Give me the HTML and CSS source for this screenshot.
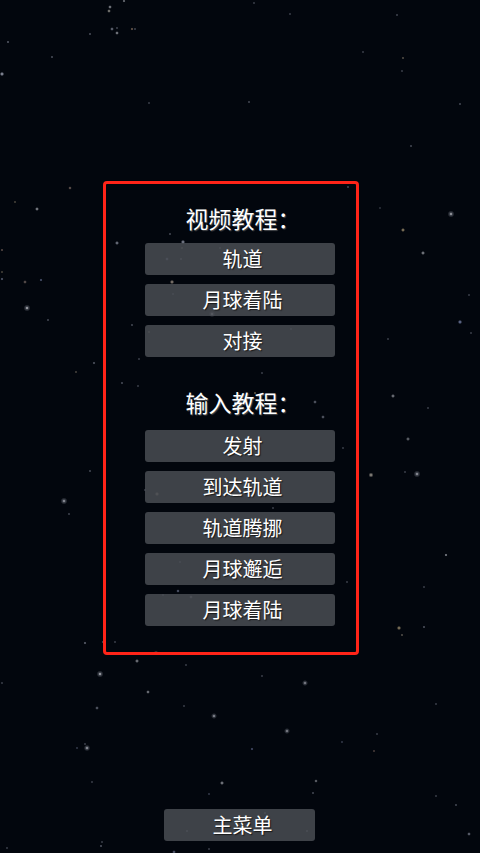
FILE: index.html
```html
<!DOCTYPE html>
<html lang="zh-CN">
<head>
<meta charset="utf-8">
<title>教程</title>
<link rel="stylesheet" href="styles.css">
</head>
<body>
<div class="page">
  <section class="panel">
    <h2 class="heading heading-video">视频教程：</h2>
    <div class="btn-list">
      <button class="btn">轨道</button>
      <button class="btn">月球着陆</button>
      <button class="btn">对接</button>
    </div>
    <h2 class="heading heading-input">输入教程：</h2>
    <div class="btn-list">
      <button class="btn">发射</button>
      <button class="btn">到达轨道</button>
      <button class="btn">轨道腾挪</button>
      <button class="btn">月球邂逅</button>
      <button class="btn">月球着陆</button>
    </div>
  </section>
  <button class="btn btn-menu">主菜单</button>
</div>
</body>
</html>
```
FILE: styles.css
```css
html, body {
  margin: 0;
  padding: 0;
  background: #02060d;
}

.page {
  width: 480px;
  height: 853px;
  display: flex;
  flex-direction: column;
  align-items: flex-start;
  font-family: "Noto Sans CJK SC", "Noto Sans", sans-serif;
  color: #fff;
  background-color: #02060d;
  background-image:
    radial-gradient(circle at 110px 7px, rgba(220,222,230,.8) 0, rgba(220,222,230,0) 1.8px),
    radial-gradient(circle at 109px 11px, rgba(220,215,200,.8) 0, rgba(220,215,200,0) 1.8px),
    radial-gradient(circle at 124px 1px, rgba(220,222,230,.7) 0, rgba(220,222,230,0) 1.6px),
    radial-gradient(circle at 112px 29px, rgba(200,205,225,.7) 0, rgba(200,205,225,0) 1.8px),
    radial-gradient(circle at 117px 28px, rgba(200,205,225,.5) 0, rgba(200,205,225,0) 1.3px),
    radial-gradient(circle at 117px 33px, rgba(220,222,230,.8) 0, rgba(220,222,230,0) 1.8px),
    radial-gradient(circle at 132px 29px, rgba(210,170,140,.7) 0, rgba(210,170,140,0) 1.6px),
    radial-gradient(circle at 135px 29px, rgba(200,205,225,.5) 0, rgba(200,205,225,0) 1.3px),
    radial-gradient(circle at 90px 34px, rgba(200,205,225,.55) 0, rgba(200,205,225,0) 1.4px),
    radial-gradient(circle at 8px 42px, rgba(200,205,225,.6) 0, rgba(200,205,225,0) 1.5px),
    radial-gradient(circle at 52px 57px, rgba(200,205,225,.55) 0, rgba(200,205,225,0) 1.4px),
    radial-gradient(circle at 2px 74px, rgba(210,215,235,.85) 0, rgba(210,215,235,0) 2.2px),
    radial-gradient(circle at 149px 103px, rgba(200,205,225,.45) 0, rgba(200,205,225,0) 1.3px),
    radial-gradient(circle at 254px 3px, rgba(200,205,225,.45) 0, rgba(200,205,225,0) 1.3px),
    radial-gradient(circle at 290px 14px, rgba(200,205,225,.45) 0, rgba(200,205,225,0) 1.3px),
    radial-gradient(circle at 397px 15px, rgba(200,205,225,.5) 0, rgba(200,205,225,0) 1.3px),
    radial-gradient(circle at 363px 52px, rgba(200,205,225,.45) 0, rgba(200,205,225,0) 1.3px),
    radial-gradient(circle at 403px 58px, rgba(210,190,160,.6) 0, rgba(210,190,160,0) 1.4px),
    radial-gradient(circle at 402px 71px, rgba(200,205,225,.45) 0, rgba(200,205,225,0) 1.3px),
    radial-gradient(circle at 249px 102px, rgba(200,205,225,.5) 0, rgba(200,205,225,0) 1.4px),
    radial-gradient(circle at 460px 104px, rgba(200,205,225,.5) 0, rgba(200,205,225,0) 1.4px),
    radial-gradient(circle at 411px 146px, rgba(200,205,225,.5) 0, rgba(200,205,225,0) 1.4px),
    radial-gradient(circle at 348px 187px, rgba(200,205,225,.5) 0, rgba(200,205,225,0) 1.4px),
    radial-gradient(circle at 380px 208px, rgba(200,205,225,.4) 0, rgba(200,205,225,0) 1.2px),
    radial-gradient(circle at 451px 214px, rgba(230,230,235,.9) 0, rgba(200,205,220,.3) 1.5px, rgba(200,205,220,0) 3.5px),
    radial-gradient(circle at 403px 230px, rgba(225,200,150,.8) 0, rgba(225,200,150,0) 2px),
    radial-gradient(circle at 423px 253px, rgba(220,222,230,.75) 0, rgba(220,222,230,0) 2px),
    radial-gradient(circle at 469px 295px, rgba(200,205,225,.45) 0, rgba(200,205,225,0) 1.3px),
    radial-gradient(circle at 460px 322px, rgba(170,185,240,.75) 0, rgba(170,185,240,0) 2.2px),
    radial-gradient(circle at 471px 333px, rgba(200,205,225,.45) 0, rgba(200,205,225,0) 1.3px),
    radial-gradient(circle at 388px 339px, rgba(200,205,225,.45) 0, rgba(200,205,225,0) 1.3px),
    radial-gradient(circle at 291px 329px, rgba(200,205,225,.45) 0, rgba(200,205,225,0) 1.3px),
    radial-gradient(circle at 262px 373px, rgba(200,205,225,.45) 0, rgba(200,205,225,0) 1.3px),
    radial-gradient(circle at 255px 393px, rgba(220,200,150,.6) 0, rgba(220,200,150,0) 1.5px),
    radial-gradient(circle at 393px 396px, rgba(220,222,230,.7) 0, rgba(220,222,230,0) 2px),
    radial-gradient(circle at 428px 408px, rgba(200,205,225,.45) 0, rgba(200,205,225,0) 1.3px),
    radial-gradient(circle at 315px 402px, rgba(200,205,225,.6) 0, rgba(200,205,225,0) 1.8px),
    radial-gradient(circle at 323px 417px, rgba(200,205,225,.6) 0, rgba(200,205,225,0) 1.8px),
    radial-gradient(circle at 117px 243px, rgba(210,215,235,.7) 0, rgba(210,215,235,0) 2px),
    radial-gradient(circle at 170px 234px, rgba(200,205,225,.5) 0, rgba(200,205,225,0) 1.4px),
    radial-gradient(circle at 183px 242px, rgba(210,215,235,.75) 0, rgba(210,215,235,0) 2.2px),
    radial-gradient(circle at 182px 248px, rgba(210,200,180,.5) 0, rgba(210,200,180,0) 1.4px),
    radial-gradient(circle at 167px 259px, rgba(180,195,240,.6) 0, rgba(180,195,240,0) 1.8px),
    radial-gradient(circle at 181px 259px, rgba(200,205,225,.5) 0, rgba(200,205,225,0) 1.5px),
    radial-gradient(circle at 172px 282px, rgba(225,205,185,.75) 0, rgba(225,205,185,0) 2.2px),
    radial-gradient(circle at 173px 294px, rgba(200,205,225,.45) 0, rgba(200,205,225,0) 1.3px),
    radial-gradient(circle at 212px 314px, rgba(225,225,235,.8) 0, rgba(200,205,220,.25) 1.5px, rgba(200,205,220,0) 3.2px),
    radial-gradient(circle at 132px 325px, rgba(200,205,225,.5) 0, rgba(200,205,225,0) 1.4px),
    radial-gradient(circle at 149px 332px, rgba(210,190,160,.5) 0, rgba(210,190,160,0) 1.4px),
    radial-gradient(circle at 139px 359px, rgba(200,205,225,.45) 0, rgba(200,205,225,0) 1.3px),
    radial-gradient(circle at 220px 248px, rgba(200,205,225,.45) 0, rgba(200,205,225,0) 1.3px),
    radial-gradient(circle at 70px 188px, rgba(215,180,160,.65) 0, rgba(215,180,160,0) 1.7px),
    radial-gradient(circle at 15px 202px, rgba(210,190,150,.5) 0, rgba(210,190,150,0) 1.4px),
    radial-gradient(circle at 37px 209px, rgba(220,222,230,.8) 0, rgba(220,222,230,0) 1.9px),
    radial-gradient(circle at 2px 250px, rgba(210,170,150,.6) 0, rgba(210,170,150,0) 1.5px),
    radial-gradient(circle at 2px 272px, rgba(210,190,150,.5) 0, rgba(210,190,150,0) 1.4px),
    radial-gradient(circle at 2px 279px, rgba(190,200,235,.6) 0, rgba(190,200,235,0) 1.6px),
    radial-gradient(circle at 25px 282px, rgba(215,185,170,.6) 0, rgba(215,185,170,0) 1.8px),
    radial-gradient(circle at 41px 280px, rgba(170,185,240,.6) 0, rgba(170,185,240,0) 1.6px),
    radial-gradient(circle at 27px 308px, rgba(235,235,240,.95) 0, rgba(200,205,220,.3) 1.5px, rgba(200,205,220,0) 3.5px),
    radial-gradient(circle at 48px 320px, rgba(200,205,225,.5) 0, rgba(200,205,225,0) 1.4px),
    radial-gradient(circle at 94px 363px, rgba(200,205,225,.55) 0, rgba(200,205,225,0) 1.6px),
    radial-gradient(circle at 76px 372px, rgba(210,190,160,.5) 0, rgba(210,190,160,0) 1.4px),
    radial-gradient(circle at 90px 471px, rgba(200,205,225,.5) 0, rgba(200,205,225,0) 1.4px),
    radial-gradient(circle at 64px 501px, rgba(225,225,235,.85) 0, rgba(200,205,220,.3) 1.5px, rgba(200,205,220,0) 3.5px),
    radial-gradient(circle at 69px 514px, rgba(200,205,225,.5) 0, rgba(200,205,225,0) 1.3px),
    radial-gradient(circle at 122px 383px, rgba(200,205,225,.5) 0, rgba(200,205,225,0) 1.5px),
    radial-gradient(circle at 138px 386px, rgba(200,205,225,.45) 0, rgba(200,205,225,0) 1.3px),
    radial-gradient(circle at 343px 448px, rgba(200,205,225,.45) 0, rgba(200,205,225,0) 1.3px),
    radial-gradient(circle at 145px 490px, rgba(200,205,225,.45) 0, rgba(200,205,225,0) 1.3px),
    radial-gradient(circle at 157px 494px, rgba(225,210,190,.6) 0, rgba(225,210,190,0) 2.2px),
    radial-gradient(circle at 273px 508px, rgba(200,205,225,.45) 0, rgba(200,205,225,0) 1.3px),
    radial-gradient(circle at 180px 562px, rgba(200,205,225,.45) 0, rgba(200,205,225,0) 1.3px),
    radial-gradient(circle at 347px 582px, rgba(200,205,225,.45) 0, rgba(200,205,225,0) 1.3px),
    radial-gradient(circle at 178px 591px, rgba(190,200,240,.6) 0, rgba(190,200,240,0) 1.7px),
    radial-gradient(circle at 163px 595px, rgba(200,205,225,.45) 0, rgba(200,205,225,0) 1.3px),
    radial-gradient(circle at 191px 597px, rgba(210,215,235,.55) 0, rgba(210,215,235,0) 1.8px),
    radial-gradient(circle at 408px 439px, rgba(220,222,230,.6) 0, rgba(220,222,230,0) 2px),
    radial-gradient(circle at 371px 475px, rgba(225,215,200,.75) 0, rgba(225,215,200,0) 2.5px),
    radial-gradient(circle at 405px 472px, rgba(200,205,225,.45) 0, rgba(200,205,225,0) 1.3px),
    radial-gradient(circle at 417px 474px, rgba(225,225,235,.85) 0, rgba(200,205,220,.3) 1.5px, rgba(200,205,220,0) 3.5px),
    radial-gradient(circle at 446px 555px, rgba(220,222,230,.8) 0, rgba(220,222,230,0) 1.6px),
    radial-gradient(circle at 424px 587px, rgba(200,205,225,.45) 0, rgba(200,205,225,0) 1.3px),
    radial-gradient(circle at 399px 628px, rgba(225,200,150,.75) 0, rgba(225,200,150,0) 2.2px),
    radial-gradient(circle at 424px 627px, rgba(200,205,225,.55) 0, rgba(200,205,225,0) 1.5px),
    radial-gradient(circle at 402px 635px, rgba(210,195,170,.55) 0, rgba(210,195,170,0) 1.5px),
    radial-gradient(circle at 85px 643px, rgba(210,215,235,.6) 0, rgba(210,215,235,0) 1.6px),
    radial-gradient(circle at 103px 642px, rgba(200,205,225,.5) 0, rgba(200,205,225,0) 1.6px),
    radial-gradient(circle at 115px 642px, rgba(200,205,225,.45) 0, rgba(200,205,225,0) 1.3px),
    radial-gradient(circle at 156px 653px, rgba(210,200,190,.55) 0, rgba(210,200,190,0) 2.4px),
    radial-gradient(circle at 137px 661px, rgba(220,222,230,.7) 0, rgba(220,222,230,0) 2px),
    radial-gradient(circle at 100px 674px, rgba(235,235,240,.95) 0, rgba(200,205,220,.3) 1.5px, rgba(200,205,220,0) 3.5px),
    radial-gradient(circle at 186px 665px, rgba(200,205,225,.45) 0, rgba(200,205,225,0) 1.3px),
    radial-gradient(circle at 262px 676px, rgba(200,205,225,.45) 0, rgba(200,205,225,0) 1.3px),
    radial-gradient(circle at 305px 683px, rgba(225,225,235,.75) 0, rgba(200,205,220,.25) 1.5px, rgba(200,205,220,0) 3px),
    radial-gradient(circle at 2px 683px, rgba(200,205,225,.45) 0, rgba(200,205,225,0) 1.3px),
    radial-gradient(circle at 148px 692px, rgba(220,222,230,.75) 0, rgba(220,222,230,0) 1.8px),
    radial-gradient(circle at 97px 708px, rgba(200,205,225,.6) 0, rgba(200,205,225,0) 1.8px),
    radial-gradient(circle at 184px 706px, rgba(200,205,225,.45) 0, rgba(200,205,225,0) 1.3px),
    radial-gradient(circle at 214px 716px, rgba(225,225,235,.8) 0, rgba(200,205,220,.25) 1.5px, rgba(200,205,220,0) 3px),
    radial-gradient(circle at 287px 731px, rgba(225,225,235,.75) 0, rgba(200,205,220,.25) 1.5px, rgba(200,205,220,0) 3px),
    radial-gradient(circle at 436px 704px, rgba(200,205,225,.45) 0, rgba(200,205,225,0) 1.3px),
    radial-gradient(circle at 377px 734px, rgba(200,205,225,.45) 0, rgba(200,205,225,0) 1.3px),
    radial-gradient(circle at 342px 742px, rgba(180,190,230,.45) 0, rgba(180,190,230,0) 1.3px),
    radial-gradient(circle at 374px 751px, rgba(215,170,150,.5) 0, rgba(215,170,150,0) 1.4px),
    radial-gradient(circle at 252px 749px, rgba(170,180,240,.55) 0, rgba(170,180,240,0) 1.6px),
    radial-gradient(circle at 85px 744px, rgba(200,205,225,.45) 0, rgba(200,205,225,0) 1.3px),
    radial-gradient(circle at 87px 748px, rgba(225,225,235,.85) 0, rgba(200,205,220,.3) 1.5px, rgba(200,205,220,0) 3.2px),
    radial-gradient(circle at 77px 748px, rgba(180,190,230,.45) 0, rgba(180,190,230,0) 1.3px),
    radial-gradient(circle at 92px 782px, rgba(200,205,225,.45) 0, rgba(200,205,225,0) 1.3px),
    radial-gradient(circle at 222px 783px, rgba(220,222,230,.75) 0, rgba(220,222,230,0) 2px),
    radial-gradient(circle at 316px 781px, rgba(220,222,230,.65) 0, rgba(220,222,230,0) 1.7px),
    radial-gradient(circle at 313px 793px, rgba(200,205,225,.5) 0, rgba(200,205,225,0) 1.4px),
    radial-gradient(circle at 209px 794px, rgba(180,190,230,.45) 0, rgba(180,190,230,0) 1.3px),
    radial-gradient(circle at 436px 796px, rgba(200,205,225,.45) 0, rgba(200,205,225,0) 1.3px),
    radial-gradient(circle at 456px 805px, rgba(200,205,225,.5) 0, rgba(200,205,225,0) 1.4px),
    radial-gradient(circle at 265px 813px, rgba(200,205,225,.5) 0, rgba(200,205,225,0) 1.4px),
    radial-gradient(circle at 187px 831px, rgba(200,205,225,.5) 0, rgba(200,205,225,0) 1.4px),
    radial-gradient(circle at 307px 831px, rgba(200,205,225,.5) 0, rgba(200,205,225,0) 1.4px),
    radial-gradient(circle at 469px 834px, rgba(210,215,235,.65) 0, rgba(210,215,235,0) 1.8px),
    radial-gradient(circle at 7px 848px, rgba(200,205,225,.45) 0, rgba(200,205,225,0) 1.3px),
    radial-gradient(circle at 102px 842px, rgba(200,205,225,.45) 0, rgba(200,205,225,0) 1.3px),
    radial-gradient(circle at 101px 846px, rgba(200,205,225,.55) 0, rgba(200,205,225,0) 1.5px),
    radial-gradient(circle at 174px 852px, rgba(190,200,240,.6) 0, rgba(190,200,240,0) 1.8px),
    radial-gradient(circle at 209px 849px, rgba(200,205,225,.45) 0, rgba(200,205,225,0) 1.3px);
  background-repeat: no-repeat;
}

.panel {
  box-sizing: border-box;
  width: 256px;
  margin: 181px 0 0 103px;
  padding: 22px 21px 26px 39px;
  border: 3px solid #ff2418;
  border-radius: 4px;
  display: flex;
  flex-direction: column;
  align-items: stretch;
}

.heading {
  margin: 0;
  height: 24px;
  padding-left: 6px;
  font-size: 23px;
  line-height: 24px;
  font-weight: normal;
  text-align: center;
  white-space: nowrap;
  text-shadow: 1px 1px 1px rgba(120,120,120,.6);
}

.heading-video {
  margin-bottom: 13px;
}

.heading-input {
  margin-top: 33px;
  margin-bottom: 16px;
}

.btn-list {
  display: flex;
  flex-direction: column;
  gap: 9px;
}

.btn {
  box-sizing: border-box;
  display: block;
  height: 32px;
  width: 100%;
  margin: 0;
  padding: 0 0 0 5px;
  border: none;
  border-radius: 3px;
  background: rgba(76,79,86,.82);
  color: #fff;
  font-family: "Noto Sans CJK SC", "Noto Sans", sans-serif;
  font-size: 20px;
  line-height: 32px;
  text-align: center;
  text-shadow: 1px 1px 1px rgba(20,20,20,.9);
  cursor: pointer;
}

.btn-menu {
  width: 151px;
  margin: 154px 0 0 164px;
  padding-left: 6px;
}
```
